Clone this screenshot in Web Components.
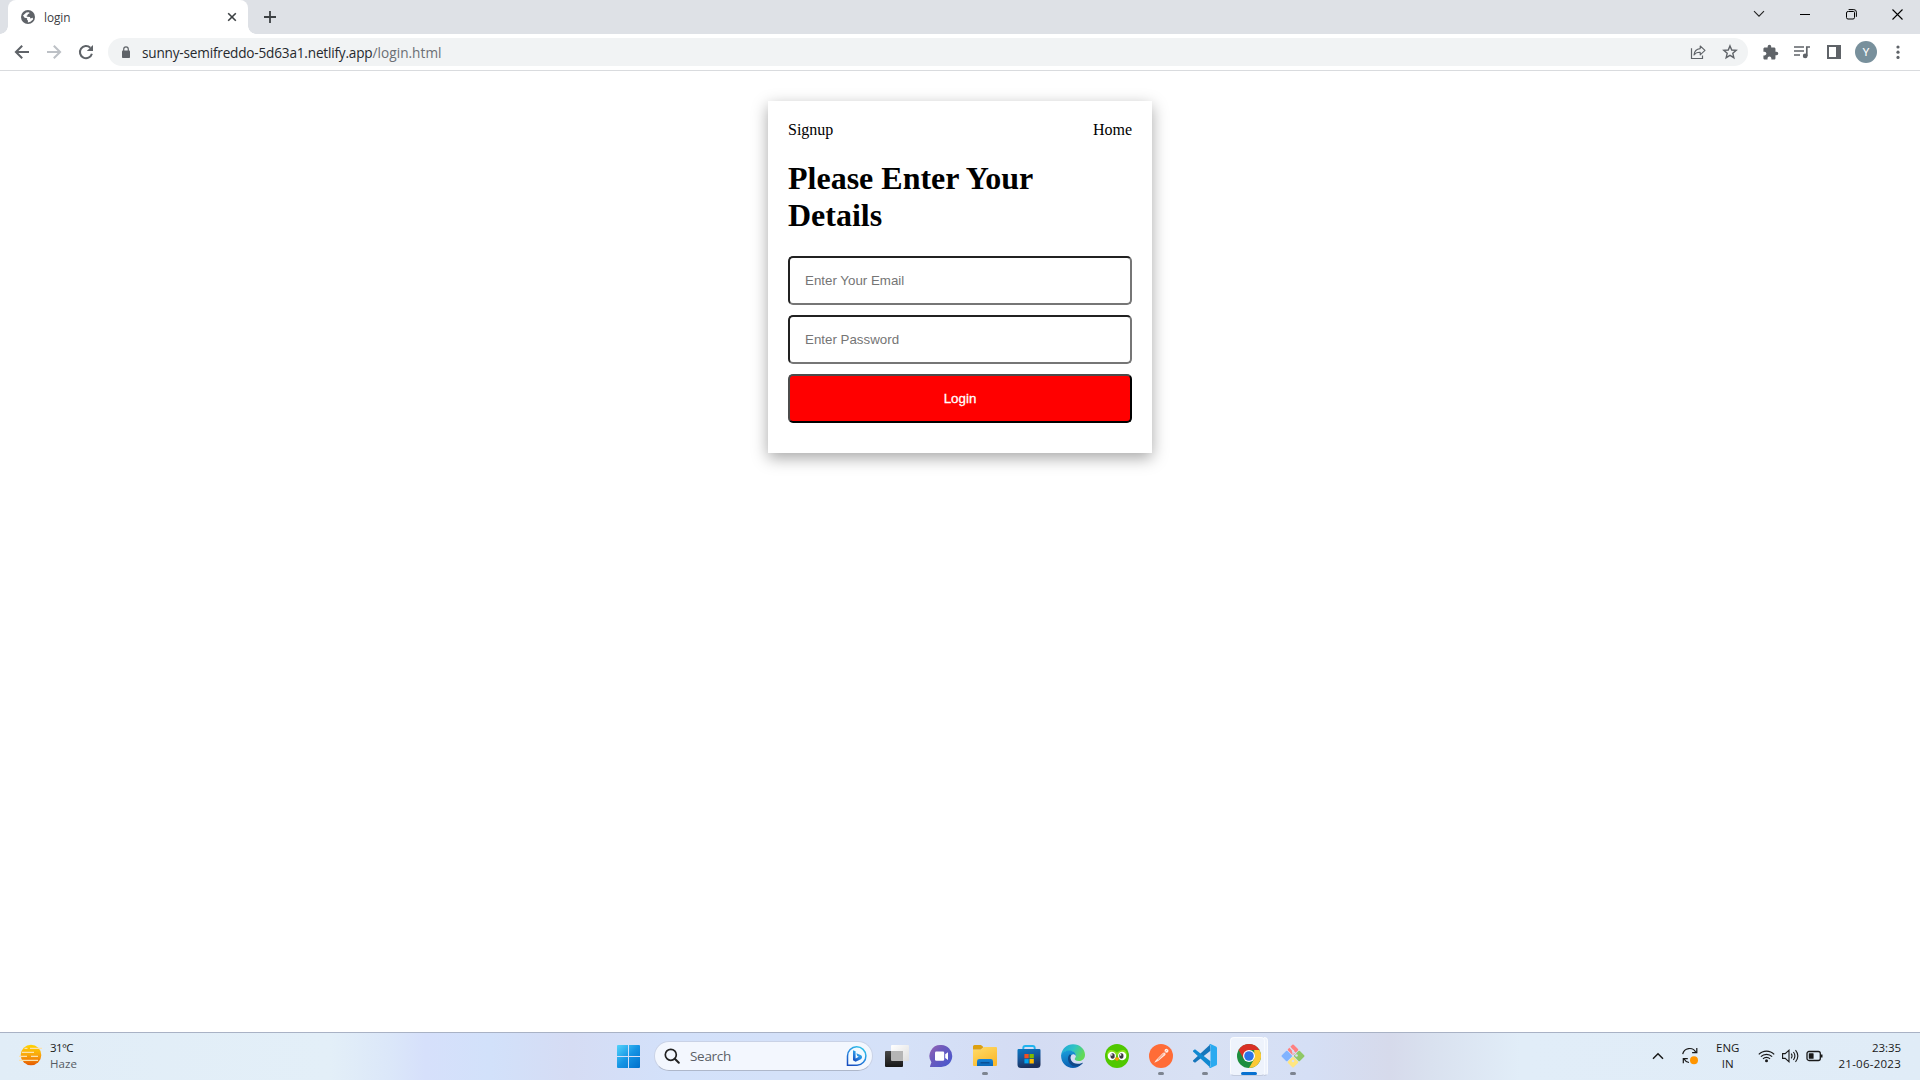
<!DOCTYPE html>
<html lang="en">
<head>
<meta charset="utf-8">
<title>login</title>
<style>
html,body{margin:0;height:100%;overflow:hidden;background:#fff}
</style>
</head>
<body>
<desktop-screen>
  <browser-window>
    <login-card></login-card>
  </browser-window>
  <task-bar></task-bar>
</desktop-screen>
<script>
const define = (name, html, ready) => {
  const tpl = document.createElement('template');
  tpl.innerHTML = html;
  customElements.define(name, class extends HTMLElement {
    constructor() {
      super();
      this.attachShadow({ mode: 'open' }).append(tpl.content.cloneNode(true));
    }
    connectedCallback() { if (ready) ready(this, this.shadowRoot); }
  });
};

// name: [width, height, svg body]
const ICONS = {
  globe: [14,14,'<circle cx="7" cy="7" r="7" fill="#5f6368"/><path d="M2 5.6L5.3 2.6 8 2.3 8.6 3.2 6.6 4.2 6.9 5 5.3 6.1 6.3 6.7 9 7 9.3 8.6 11.8 7.8 12 9.4 9.4 11.8 6.8 12.4 7 10.8 6 9.6 6.2 8.2 3.6 7.8Z" fill="#fff"/>'],
  tabclose: [10,10,'<path d="M1.2 1.2l7.6 7.6M8.8 1.2L1.2 8.8" stroke="#3c4043" stroke-width="1.6"/>'],
  plus: [12,12,'<path d="M6 0v12M0 6h12" stroke="#3c4043" stroke-width="1.8"/>'],
  chevron: [12,12,'<path d="M1 3.2l5 5 5-5" fill="none" stroke="#222" stroke-width="1.1"/>'],
  minimize: [10,10,'<path d="M0 5.5h10" stroke="#000"/>'],
  restore: [11,11,'<path d="M2.5 2.5h5a1 1 0 0 1 1 1v5a1.500 1.500 0 0 1-1.500 1.500h-5a1.500 1.500 0 0 1-1.500-1.500V4a1.500 1.500 0 0 1 1.500-1.500zM2.6 .6h5.2a2.6 2.6 0 0 1 2.6 2.6v4.6" fill="none" stroke="#000"/>'],
  close: [11,11,'<path d="M.5 .5l10 10M10.500 .5l-10 10" stroke="#000" stroke-width="1.1"/>'],
  back: [16,16,'<path d="M15 8H2.400M8.200 1.700L1.900 8l6.300 6.300" fill="none" stroke="#5f6368" stroke-width="2"/>'],
  forward: [16,16,'<path d="M1 8h12.600M7.800 1.700L14.100 8l-6.300 6.300" fill="none" stroke="#bdc1c6" stroke-width="2"/>'],
  reload: [16,16,'<path d="M13.900 9.700A6.100 6.100 0 1 1 12.300 3.700" fill="none" stroke="#5f6368" stroke-width="2"/><path d="M15 .9v6.200H8.800z" fill="#5f6368"/>'],
  lock: [10,13,'<rect x="1" y="4.500" width="8" height="7.500" rx=".8" fill="#5f6368"/><path d="M2.700 5V3.200a2.300 2.300 0 0 1 4.600 0V5" fill="none" stroke="#5f6368" stroke-width="1.200"/>'],
  share: [16,16,'<path d="M1.500 4.200v10.300h11v-3" fill="none" stroke="#5f6368" stroke-width="1.200"/><path d="M10.200 2l4.800 4.400-4.800 4.400V8.300C7.500 8.200 5.400 9 4 11c.3-3.500 2.600-6 6.200-6.400z" fill="none" stroke="#5f6368" stroke-width="1.100" stroke-linejoin="round"/>'],
  star: [16,16,'<path d="M8 1.900l1.750 4.100 4.450.4-3.400 2.900 1.050 4.400L8 11.350 4.150 13.700 5.200 9.300 1.800 6.400 6.250 6z" fill="none" stroke="#5f6368" stroke-width="1.400"/>'],
  puzzle: [24,24,'<path fill="#5f6368" d="M20.500 11H19V7c0-1.100-.9-2-2-2h-4V3.500a2.500 2.500 0 0 0-5 0V5H4c-1.100 0-1.990.9-1.990 2v3.800H3.500c1.490 0 2.700 1.210 2.700 2.700s-1.210 2.700-2.700 2.700H2V20c0 1.100.9 2 2 2h3.800v-1.500c0-1.490 1.210-2.700 2.700-2.700s2.700 1.210 2.700 2.700V22H17c1.100 0 2-.9 2-2v-4h1.500a2.500 2.500 0 0 0 0-5z"/>'],
  playlist: [16,14,'<path d="M0 2h10M0 6h10M0 10h6" stroke="#5f6368" stroke-width="1.700"/><path d="M12.800 11V2h3.200" fill="none" stroke="#5f6368" stroke-width="1.700"/><circle cx="11.200" cy="10.900" r="2.400" fill="#5f6368"/>'],
  panel: [14,14,'<path fill="#5f6368" fill-rule="evenodd" d="M0 0h14v14H0zM2 2v10h7V2z"/>'],
  dots: [4,14,'<g fill="#5f6368"><circle cx="2" cy="2" r="1.600"/><circle cx="2" cy="7.200" r="1.600"/><circle cx="2" cy="12.400" r="1.600"/></g>'],
  haze: [24,22,'<defs><linearGradient id="h" x2="0" y2="1"><stop stop-color="#ffd400"/><stop offset=".5" stop-color="#f9a60d"/><stop offset="1" stop-color="#e55a00"/></linearGradient></defs><circle cx="13" cy="11" r="10.300" fill="url(#h)"/><g stroke="#fbe2ae" stroke-width="1.300"><path d="M6.500 4.300h3M12 4.300h12M4 8.300h12M1 12.300h8M13 12.300h7M1 16.300h19"/></g>'],
  start: [24,24,'<defs><linearGradient id="w" x2="1" y2="1"><stop stop-color="#52d3fb"/><stop offset=".5" stop-color="#1594e4"/><stop offset="1" stop-color="#006fcb"/></linearGradient></defs><path fill="url(#w)" d="M2 1H12v11H1v-10a1 1 0 0 1 1-1zM13 1h10a1 1 0 0 1 1 1v10H13zM1 13H12v11H2a1 1 0 0 1-1-1zM13 13h11v10a1 1 0 0 1-1 1H13z"/>'],
  search: [16,16,'<circle cx="6.800" cy="6.800" r="5.500" fill="none" stroke="#222" stroke-width="1.700"/><path d="M10.800 10.800l4 4" stroke="#222" stroke-width="2" stroke-linecap="round"/>'],
  bing: [22,22,'<defs><linearGradient id="b" x1=".8" x2=".2" y2="1"><stop stop-color="#31c5e8"/><stop offset=".5" stop-color="#278be2"/><stop offset="1" stop-color="#174ec0"/></linearGradient></defs><path d="M1.500 20.200V11a9.200 9.200 0 1 1 9.600 9.200z" fill="#f2faff" stroke="url(#b)" stroke-width="1.500"/><path d="M7 5.200l2.600 1v7.300l3.200-1.700-1.500-.9-1-2.600 4.300 1.700c1.900.8 2 3.200.2 4.200L9.600 16.700 7 15.200z" fill="url(#b)"/>'],
  taskview: [24,24,'<defs><linearGradient id="t1" x2="0" y2="1"><stop stop-color="#484848"/><stop offset="1" stop-color="#171717"/></linearGradient><linearGradient id="t2" x2="1" y2="1"><stop stop-color="#fff"/><stop offset="1" stop-color="#dedede"/></linearGradient></defs><rect x="6" y="1" width="18" height="16" rx="1" fill="url(#t2)"/><rect x="0" y="7" width="18" height="16" rx="1" fill="url(#t1)"/><path d="M6 7h12v10H7a1 1 0 0 1-1-1z" fill="#b5b5b5"/>'],
  chat: [24,24,'<defs><linearGradient id="c" x2=".9" y2=".8"><stop stop-color="#9965b4"/><stop offset=".45" stop-color="#6c5abd"/><stop offset="1" stop-color="#4c58cb"/></linearGradient></defs><path d="M12.500 1A11 11 0 1 1 12 23H1.800c-.8 0-1-.6-.6-1.200l1.200-3.600A11 11 0 0 1 12.500 1z" fill="url(#c)"/><rect x="6" y="7.500" width="9.200" height="9.200" rx="1.300" fill="#fff"/><path d="M16.200 10.300l2.800-2v7.600l-2.800-2z" fill="#fff"/>'],
  folder: [24,24,'<defs><linearGradient id="f" x2=".6" y2="1"><stop stop-color="#ffdc69"/><stop offset="1" stop-color="#fbb92d"/></linearGradient><linearGradient id="f2" x2="0" y2="1"><stop stop-color="#1683d8"/><stop offset="1" stop-color="#0b68b7"/></linearGradient></defs><path d="M0 5.600h8l3-2.500h12a1 1 0 0 1 1 1V21a1 1 0 0 1-1 1H1a1 1 0 0 1-1-1z" fill="url(#f)"/><path d="M0 2.500Q0 1 1.500 1h6.300q1.700 1 2.600 2.200L7.700 5.600H0z" fill="#dda010"/><path d="M4 22v-4.600A2.400 2.400 0 0 1 6.400 15h11.200a2.400 2.400 0 0 1 2.400 2.400V22z" fill="url(#f2)"/><path d="M7.500 18.800h9" stroke="#0b4a8c" stroke-width="1.300"/>'],
  store: [24,24,'<defs><linearGradient id="s" x2=".3" y2="1"><stop stop-color="#0879c4"/><stop offset=".5" stop-color="#16569b"/><stop offset="1" stop-color="#1b2f5a"/></linearGradient></defs><path d="M6.300 6V4q0-2 2-2h7.400q2 0 2 2v2" fill="none" stroke="#20b3ee" stroke-width="1.900"/><path d="M.5 6.200Q.5 5 1.700 5h20.600q1.200 0 1.200 1.200V20.500a3.500 3.500 0 0 1-3.500 3.500H4A3.500 3.500 0 0 1 .5 20.500z" fill="url(#s)"/><path d="M7.400 10h4.300v4.300H7.400z" fill="#f25022"/><path d="M12.500 10h4.300v4.300h-4.300z" fill="#7fba00"/><path d="M7.400 15.100h4.300v4.300H7.400z" fill="#00a4ef"/><path d="M12.500 15.100h4.300v4.300h-4.300z" fill="#ffb900"/>'],
  edge: [24,24,'<defs><linearGradient id="e1" x2="1" y2=".4"><stop stop-color="#1fa3dd"/><stop offset=".55" stop-color="#2fc4c3"/><stop offset="1" stop-color="#62d957"/></linearGradient><linearGradient id="e2" x2=".3" y2="1"><stop stop-color="#1ba0dc"/><stop offset="1" stop-color="#0a5fb2"/></linearGradient></defs><path d="M.1 11C1 4.600 5.800.2 12 .2c7 0 12 5 12 10.500 0 4-2.800 6.300-6.300 6.300-3 0-4-1.200-4-2 0-.8 1.200-1.200 1.200-3C14.900 9 12 7 8.400 7 4.300 7 1.200 8.900.1 11z" fill="url(#e1)"/><path d="M.1 11C1.200 8.300 4.600 6.600 8.400 6.600c3.700 0 6.500 2.300 6.500 5.400-1-1.500-2.300-1.900-3.400-1.500-2.500.9-3 4-1.700 6.700 1.500 3 5.600 4.900 10.700 2.800-2 2.600-5 4-8.600 4C5.200 24-.3 18.500.1 11z" fill="url(#e2)"/><path d="M8.300 10.800c-2.400 2.700-1.700 8.400 3.400 11.200 3.700 1.200 7.300 0 9.900-2.500.4-.5 0-.9-.6-.6-4.600 1.900-8.900.7-10.600-2.100-1.300-2.100-1.200-4.300-.1-5.700-.8-.5-1.500-.7-2-.3z" fill="#114a8b"/>'],
  owl: [24,24,'<circle cx="12" cy="12" r="12" fill="#50c800"/><path d="M2.200 11.500C1.700 7.500 4 5.500 7.500 6.200c2 .4 3.300 1.200 4.500 2.300 1.200-1.100 2.500-1.900 4.500-2.300 3.500-.7 5.800 1.300 5.300 5.300z" fill="#89e219"/><ellipse cx="6.900" cy="12" rx="4.200" ry="4.300" fill="#fff"/><ellipse cx="17.100" cy="12" rx="4.200" ry="4.300" fill="#fff"/><ellipse cx="7.600" cy="12" rx="2.100" ry="2.800" fill="#3b3b42"/><ellipse cx="16.400" cy="12" rx="2.100" ry="2.800" fill="#3b3b42"/><circle cx="6.800" cy="10.900" r=".8" fill="#fff"/><circle cx="15.600" cy="10.900" r=".8" fill="#fff"/><path d="M9.800 14q2.200-1.600 4.400 0l-.5 1.700q-1.700 1.900-3.400 0z" fill="#f99a0a"/>'],
  postman: [24,24,'<circle cx="12" cy="12" r="12" fill="#ff6c37"/><path d="M5.300 18.800l1.300-2.300 7-7.300q1.400-1.300 2.600-.2 1.100 1.200-.2 2.300l-6.800 5.600z" fill="#fbe5dc"/><circle cx="17.500" cy="6.700" r="2" fill="#fff0e9"/><path d="M8.800 15.700l5.700-5.700" stroke="#ff7c4e" stroke-width=".9"/><path d="M16.500 7.500l2-2" stroke="#ff9a76" stroke-width=".7"/>'],
  vscode: [24,24,'<path d="M17.500 6.700L2 18.800.2 17.500c-.4-.4-.4-.9 0-1.300L17.200.5z" fill="#1676bb"/><path d="M17.500 17.300L2 5.200.2 6.500c-.4.4-.4.900 0 1.300l17 15.700z" fill="#1089d1"/><path d="M17.500 0l5.500 2.500q1 .5 1 1.500v16q0 1-1 1.500L17.500 24q-1 .1-1.700-.6.9.3 1.700-.8V1.400q-.8-1.100-1.700-.8.7-.7 1.700-.6z" fill="#2aaaf0"/>'],
  chrome: [24,24,'<circle cx="12" cy="12" r="12" fill="#1e8e3e"/><path d="M22.400 6A12 12 0 0 1 12 24l5.200-9V6z" fill="#fcc934"/><path d="M1.610 6A12 12 0 0 1 22.400 6H12L6.800 15z" fill="#d93025"/><circle cx="12" cy="12" r="6" fill="#fff"/><circle cx="12" cy="12" r="4.800" fill="#2b73e8"/>'],
  git: [24,24,'<g transform="translate(12 12) rotate(45)"><rect x="-8.400" y="-8.400" width="8" height="8" rx="1" fill="#ff8080"/><rect x=".4" y="-8.400" width="8" height="8" rx="1" fill="#8fc866"/><rect x="-8.400" y=".4" width="8" height="8" rx="1" fill="#80b3ff"/><rect x=".4" y=".4" width="8" height="8" rx="1" fill="#ffe680"/></g><path d="M8.500 2.800l3.500 4v4M12 7l3 3" fill="none" stroke="#d8dff2" stroke-width="1.300"/><circle cx="12" cy="7" r="1.200" fill="#d8dff2"/><circle cx="15.500" cy="11.500" r="1.300" fill="#d8dff2"/><circle cx="12" cy="17" r="1.300" fill="#d8dff2"/>'],
  up: [12,8,'<path d="M1 6.700l5-5 5 5" fill="none" stroke="#191919" stroke-width="1.500"/>'],
  update: [18,18,'<path d="M1.700 7.200A7 7 0 0 1 14.800 5.300M15.800 1v4.700h-4.700M8 15.500A7 7 0 0 1 3 12M6.800 11.700H2.300v4.500" fill="none" stroke="#191919" stroke-width="1.200"/><circle cx="13" cy="13.200" r="4" fill="#ff9500"/>'],
  wifi: [17,14,'<g fill="none" stroke="#191919" stroke-width="1.200"><path d="M.8 5.400a10.600 10.600 0 0 1 15.400 0M2.900 7.700a7.700 7.700 0 0 1 11.200 0M5 9.900a4.800 4.800 0 0 1 7 0"/></g><circle cx="8.500" cy="11.700" r="1.500" fill="#191919"/>'],
  sound: [17,14,'<g fill="none" stroke="#191919" stroke-width="1.100"><path d="M.6 4.600h2.600L7 1.200v11.600L3.200 9.400H.6zM9.200 4.700q1.700 2.300 0 4.600M11.400 3q3 4 0 8M13.500 1.200q4.700 5.800 0 11.600"/></g>'],
  battery: [17,12,'<rect x="1" y="1.500" width="13.300" height="9" rx="2" fill="none" stroke="#191919" stroke-width="1.300"/><rect x="2.800" y="3.200" width="4.800" height="5.600" rx=".6" fill="#191919"/><path d="M15.600 4.500v3" stroke="#191919" stroke-width="1.800"/>']
};

define('ui-icon', `<style>:host{display:block;flex:none;line-height:0}svg{display:block}</style>`, (el, root) => {
  const [w, h, body] = ICONS[el.getAttribute('name')];
  const width = +(el.getAttribute('size') || w);
  const box = document.createElement('div');
  box.innerHTML = `<svg width="${width}" height="${width * h / w}" viewBox="0 0 ${w} ${h}">${body}</svg>`;
  root.append(box);
});

// A line of text whose tracking is tuned so that it spans the given width.
define('ui-text', `<style>:host{display:block;width:max-content;white-space:nowrap}span{display:inline-block}</style><span><slot></slot></span>`, (el, root) => {
  const span = root.querySelector('span');
  const target = +el.getAttribute('w');
  if (target) {
    const n = el.textContent.length;
    span.style.letterSpacing = (target - span.getBoundingClientRect().width) / n + 'px';
  }
});

define('browser-tab', `<style>
:host{display:flex;align-items:center;box-sizing:border-box;width:240px;height:34px;margin-left:8px;padding:0 11px 0 13px;background:#fff;border-radius:8px 8px 0 0;position:relative;font:11.8px/18px "Open Sans",sans-serif;color:#3c4043}
:host::before,:host::after{content:"";position:absolute;bottom:0;width:8px;height:8px}
:host::before{left:-8px;background:radial-gradient(circle at 0 0,transparent 7.500px,#fff 8px)}
:host::after{right:-8px;background:radial-gradient(circle at 100% 0,transparent 7.500px,#fff 8px)}
.t{margin-left:9px;flex:1}
</style><ui-icon name="globe"></ui-icon><div class="t"><slot></slot></div><ui-icon name="tabclose"></ui-icon>`);

define('tab-strip', `<style>
:host{display:flex;height:34px;background:#dee1e6;align-items:center}
.plus{margin-left:16px}
.win{display:flex;align-self:flex-start;margin-left:auto;height:28px}
.win div{width:46px;display:grid;place-items:center}
</style><browser-tab><ui-text w="26.500">login</ui-text></browser-tab><ui-icon class="plus" name="plus"></ui-icon>
<div class="win"><div><ui-icon name="chevron"></ui-icon></div><div><ui-icon name="minimize"></ui-icon></div><div><ui-icon name="restore"></ui-icon></div><div><ui-icon name="close"></ui-icon></div></div>`);

define('tool-bar', `<style>
:host{display:flex;align-items:center;box-sizing:border-box;height:37px;border-bottom:1px solid #d9dbde;background:#fff;padding-left:6px;padding-right:6px}
.b{width:32px;display:grid;place-items:center}
.omni{flex:1;margin-left:6px;margin-right:6px;height:28px;border-radius:14px;background:#f1f3f4;display:flex;align-items:center;padding:0 2px 0 13px}
.url{display:flex;margin-left:11px;padding-top:1px;flex:1;font:13.600px/20px "Open Sans",sans-serif;color:#26292d}
.path{color:#6b6f74}
.av{width:22px;height:22px;border-radius:50%;background:#78909c;color:#fff;display:grid;place-items:center;font:11.500px/22px Roboto,sans-serif}
</style>
<div class="b"><ui-icon name="back"></ui-icon></div><div class="b"><ui-icon name="forward"></ui-icon></div><div class="b"><ui-icon name="reload"></ui-icon></div>
<div class="omni"><ui-icon name="lock"></ui-icon><div class="url"><ui-text w="230.500">sunny-semifreddo-5d63a1.netlify.app</ui-text><ui-text class="path" w="69">/login.html</ui-text></div><div class="b"><ui-icon name="share"></ui-icon></div><div class="b"><ui-icon name="star"></ui-icon></div></div>
<div class="b"><ui-icon name="puzzle" size="17"></ui-icon></div><div class="b"><ui-icon name="playlist"></ui-icon></div><div class="b"><ui-icon name="panel"></ui-icon></div><div class="b"><div class="av">Y</div></div><div class="b"><ui-icon name="dots"></ui-icon></div>`);

define('browser-window', `<style>:host{display:flex;flex-direction:column;flex:1;min-height:0}main{flex:1;padding-top:30px;display:flex;justify-content:center;align-items:flex-start}</style>
<tab-strip></tab-strip><tool-bar></tool-bar><main><slot></slot></main>`);

define('login-card', `<style>
:host{display:block;box-sizing:border-box;width:384px;height:352px;padding:20px;background:#fff;box-shadow:rgba(0,0,0,.35) 0 5px 15px;font:16px/18px "Liberation Serif",serif;color:#000}
nav{display:flex;justify-content:space-between;height:18px}
h1{font-size:32px;line-height:37px;margin:21.440px 0;font-weight:bold}
input,button{display:block;box-sizing:border-box;width:344px;height:49px;margin:0 0 10px;padding:15px;border:2px solid;border-radius:5px;font:13.333px/15px "Liberation Sans",sans-serif;background:#fff}
input{border-color:#212121 #767676 #767676 #212121}
input::placeholder{color:#757575;opacity:1}
button{background:red;color:#fff;border-color:#4c4c4c #000 #000 #4c4c4c;-webkit-text-stroke:.3px #fff}
</style><nav><span>Signup</span><span>Home</span></nav><h1>Please Enter Your Details</h1>
<input placeholder="Enter Your Email"><input type="password" placeholder="Enter Password"><button>Login</button>`);

define('task-app', `<style>
:host{display:flex;flex:none;width:44px;height:46px;align-items:center;justify-content:center;position:relative}
:host([tile])::before,:host([tile])::after{content:"";position:absolute;box-sizing:border-box;top:4px;height:39px;border-radius:4px;background:rgba(246,249,255,.72);border:1px solid rgba(255,255,255,.65);border-bottom-color:#c3cbdd}
:host([tile])::before{left:3px;width:35px}
:host([tile])::after{left:37px;width:4px;border-left:0;border-radius:0 4px 4px 0}
.icon{position:relative}
i{position:absolute;bottom:4px;left:19px;width:6px;height:3px;border-radius:2px;background:#7d8490;display:none}
:host([open]) i{display:block}
:host([tile]) i{width:16px;left:14px;background:#0871d0}
</style><div class="icon"><slot></slot></div><i></i>`);

define('task-bar', `<style>
:host{display:flex;align-items:center;box-sizing:border-box;height:48px;padding-bottom:1px;border-top:1px solid #a9b2c5;font:11.500px/16px "Open Sans",sans-serif;color:#1a1a1a;
background:linear-gradient(90deg,#e1edf7 0,#e3eff8 330px,#dbe7f9 390px,#d6e0fb 425px,#d2e1fa 490px,#d5dcf4 570px,#d3e1fa 670px,#d5e1f8 900px,#d4dcf3 1030px,#d8e1f4 1200px,#d5dff5 1310px,#d6daeb 1390px,#d9e1ef 1430px,#e1edf8 1520px,#e0ecf7 1920px)}
.weather{width:606px;box-sizing:border-box;padding-left:18px;display:flex;align-items:center;gap:8px}
.weather small{font-size:inherit;color:#555b63;display:block}
.weather ui-icon{margin-top:-2px}
.search{box-sizing:border-box;width:219px;height:30px;margin:0 2px 0 4px;border-radius:16px;background:#f3f7fe;border:1px solid #c9d2e6;border-bottom-color:#aeb7ca;display:flex;align-items:center;padding:0 4px 0 9px;font-size:13.500px;color:#5b5f66}
.search ui-text{margin-left:10px;flex:1}
.tray{margin-left:auto;display:flex;align-items:center;padding-right:19px}
.c{display:flex;flex-direction:column;align-items:center}.r{display:flex;flex-direction:column;align-items:flex-end}
</style>
<div class="weather"><ui-icon name="haze"></ui-icon><div><ui-text w="23">31°C</ui-text><small><ui-text w="27">Haze</ui-text></small></div></div>
<task-app><ui-icon name="start"></ui-icon></task-app>
<div class="search"><ui-icon name="search"></ui-icon><ui-text w="41">Search</ui-text><ui-icon name="bing"></ui-icon></div>
<task-app><ui-icon name="taskview"></ui-icon></task-app>
<task-app><ui-icon name="chat"></ui-icon></task-app>
<task-app open><ui-icon name="folder"></ui-icon></task-app>
<task-app><ui-icon name="store"></ui-icon></task-app>
<task-app><ui-icon name="edge"></ui-icon></task-app>
<task-app><ui-icon name="owl"></ui-icon></task-app>
<task-app open><ui-icon name="postman"></ui-icon></task-app>
<task-app open><ui-icon name="vscode"></ui-icon></task-app>
<task-app open tile><ui-icon name="chrome"></ui-icon></task-app>
<task-app open><ui-icon name="git"></ui-icon></task-app>
<div class="tray"><ui-icon name="up"></ui-icon><ui-icon name="update" style="margin-left:17px"></ui-icon>
<div class="c" style="margin-left:17px"><ui-text w="23.500">ENG</ui-text><ui-text w="12">IN</ui-text></div>
<ui-icon name="wifi" style="margin-left:18px"></ui-icon><ui-icon name="sound" style="margin-left:7px"></ui-icon><ui-icon name="battery" style="margin-left:7px"></ui-icon>
<div class="r" style="margin-left:16px"><ui-text w="29">23:35</ui-text><ui-text w="62.500">21-06-2023</ui-text></div></div>`);

define('desktop-screen', `<style>:host{display:flex;flex-direction:column;width:1920px;height:1080px;background:#fff}</style><slot></slot>`);
</script>
</body>
</html>
